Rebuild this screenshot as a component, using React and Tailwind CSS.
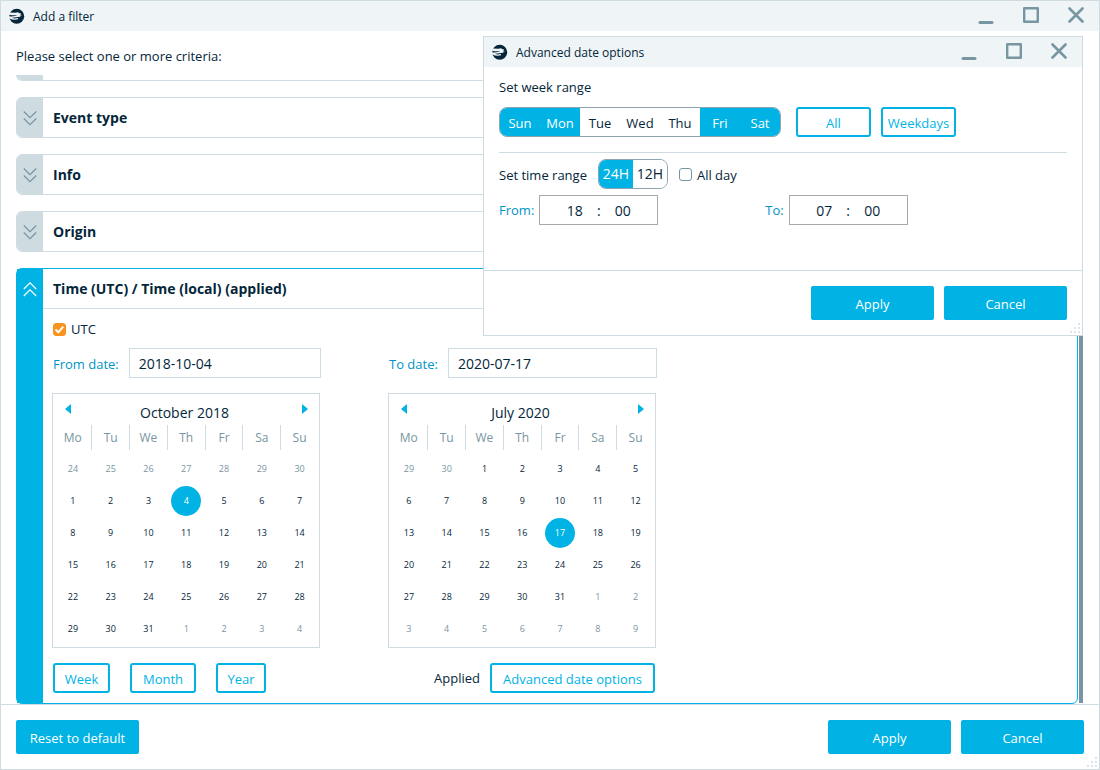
import React, { useState } from 'react';

const DAY_NAMES = ['Mo', 'Tu', 'We', 'Th', 'Fr', 'Sa', 'Su'];
const WEEK = ['Sun', 'Mon', 'Tue', 'Wed', 'Thu', 'Fri', 'Sat'];

// Build six weeks of days, padded with the neighbouring months
function buildWeeks(lead, prevLast, last) {
  const weeks = [];
  for (let w = 0; w < 6; w++) {
    const row = [];
    for (let d = 0; d < 7; d++) {
      const n = w * 7 + d - lead + 1;
      if (n < 1) row.push({ day: prevLast + n, outside: true });
      else if (n > last) row.push({ day: n - last, outside: true });
      else row.push({ day: n, outside: false });
    }
    weeks.push(row);
  }
  return weeks;
}

export default function App() {
  const [utc, setUtc] = useState(true);

  return (
    <div className="relative flex h-screen flex-col overflow-hidden border border-[#cedbe0] bg-white font-['Open_Sans','Noto_Sans',sans-serif] text-[13px] leading-5 text-[#04263a]">
      <TitleBar title="Add a filter" />

      <p className="px-[15px] pt-[15px] pb-[9px]">Please select one or more criteria:</p>

      {/* Criteria list */}
      <main className="flex min-h-0 flex-1 gap-px pr-4 pl-[15px]">
        <div className="flex min-w-0 flex-1 flex-col gap-4 overflow-hidden">
          <div className="flex h-1.5 shrink-0 overflow-hidden rounded-b-md border-b border-[#cedbe0]">
            <div className="w-[27px] bg-[#cedbe0]" />
          </div>
          <CollapsedCard title="Event type" />
          <CollapsedCard title="Info" />
          <CollapsedCard title="Origin" />

          <section className="flex flex-1 rounded-md border border-[#00b3e4]">
            <button aria-label="Collapse" className="flex w-[26px] items-start justify-center bg-[#00b3e4] pt-3 text-white">
              <Chevrons up />
            </button>
            <div className="min-w-0 flex-1">
              <h2 className="flex h-10 items-center border-b border-[#cedbe0] px-2.5 text-sm font-bold">
                Time (UTC) / Time (local) (applied)
              </h2>
              <div className="px-[9px] pt-2.5">
                <label className="flex h-5 items-center gap-[5px] pl-px">
                  <Checkbox checked={utc} onChange={() => setUtc(!utc)} />
                  UTC
                </label>
                <div className="mt-[9px] flex gap-[68px]">
                  <DateColumn
                    id="from-date"
                    label="From date:"
                    value="2018-10-04"
                    month="October 2018"
                    weeks={buildWeeks(7, 30, 31)}
                    selected={4}
                  >
                    <div className="flex gap-5 pl-px">
                      <OutlineButton className="w-[57px]">Week</OutlineButton>
                      <OutlineButton className="w-[66px]">Month</OutlineButton>
                      <OutlineButton className="w-[50px]">Year</OutlineButton>
                    </div>
                  </DateColumn>
                  <DateColumn
                    id="to-date"
                    label="To date:"
                    value="2020-07-17"
                    month="July 2020"
                    weeks={buildWeeks(2, 30, 31)}
                    selected={17}
                  >
                    <div className="flex items-center justify-end gap-2.5 pr-px">
                      <span>Applied</span>
                      <OutlineButton className="w-[165px]">Advanced date options</OutlineButton>
                    </div>
                  </DateColumn>
                </div>
              </div>
            </div>
          </section>
        </div>
        <div className="mb-px w-1 bg-[#7895a2]" />
      </main>

      <footer className="flex items-center gap-2.5 border-t border-[#cedbe0] p-[15px]">
        <SolidButton>Reset to default</SolidButton>
        <div className="flex-1" />
        <SolidButton>Apply</SolidButton>
        <SolidButton>Cancel</SolidButton>
      </footer>
      <ResizeGrip />

      <AdvancedDialog />
    </div>
  );
}

// Advanced date options, floats over the filter list
function AdvancedDialog() {
  const [days, setDays] = useState(['Sun', 'Mon', 'Fri', 'Sat']);
  const [format, setFormat] = useState('24H');
  const [allDay, setAllDay] = useState(false);

  const toggleDay = (day) => {
    setDays(days.includes(day) ? days.filter((d) => d !== day) : [...days, day]);
  };

  return (
    <div
      role="dialog"
      aria-label="Advanced date options"
      className="absolute top-[35px] right-4 w-[600px] border border-[#cedbe0] bg-white"
    >
      <TitleBar title="Advanced date options" />

      <div className="px-[15px] pt-2.5 pb-[45px]">
        <h3>Set week range</h3>
        <div className="mt-2.5 flex">
          <div className="mr-[15px] flex h-[30px] overflow-hidden rounded-lg border border-[#8ca5b0]">
            {WEEK.map((day) => (
              <button
                key={day}
                aria-pressed={days.includes(day)}
                onClick={() => toggleDay(day)}
                className={`w-10 pt-px ${days.includes(day) ? 'bg-[#00b3e4] text-white' : 'bg-white'}`}
              >
                {day}
              </button>
            ))}
          </div>
          <OutlineButton className="mr-2.5 w-[75px]">All</OutlineButton>
          <OutlineButton className="w-[75px]">Weekdays</OutlineButton>
        </div>

        <div className="mt-[15px] flex items-center border-t border-[#cedbe0] pt-1.5">
          <h3 className="pt-0.5">Set time range</h3>
          <div className="mx-[11px] flex h-[30px] overflow-hidden rounded-lg border border-[#8ca5b0] text-sm">
            {['24H', '12H'].map((f) => (
              <button
                key={f}
                aria-pressed={format === f}
                onClick={() => setFormat(f)}
                className={`w-[34px] ${format === f ? 'bg-[#00b3e4] text-white' : 'bg-white'}`}
              >
                {f}
              </button>
            ))}
          </div>
          <label className="flex items-center gap-[5px]">
            <Checkbox checked={allDay} onChange={() => setAllDay(!allDay)} />
            <span className="pt-0.5">All day</span>
          </label>
        </div>

        <div className="mt-1.5 flex">
          <TimeField label="From:" hours="18" minutes="00" />
          <div className="w-[107px]" />
          <TimeField label="To:" hours="07" minutes="00" />
        </div>
      </div>

      <div className="flex justify-end gap-2.5 border-t border-[#cedbe0] p-[15px]">
        <SolidButton>Apply</SolidButton>
        <SolidButton>Cancel</SolidButton>
      </div>
      <ResizeGrip />
    </div>
  );
}

function TitleBar({ title }) {
  return (
    <header className="flex h-[30px] shrink-0 items-center bg-[#eff4f7] pr-[15px] pl-2 text-xs">
      <Logo />
      <span className="ml-2 flex-1 pt-0.5">{title}</span>
      <div className="flex gap-7 pb-0.5 text-[#7895a2]">
        <button aria-label="Minimize">
          <svg width="16" height="18" viewBox="0 0 16 18" fill="none" stroke="currentColor" strokeWidth="3" strokeLinecap="round">
            <path d="M2 16.500h12" />
          </svg>
        </button>
        <button aria-label="Maximize">
          <svg width="18" height="18" viewBox="0 0 18 18" fill="none" stroke="currentColor" strokeWidth="2.4" strokeLinejoin="round">
            <path d="M2.200 2.200h13.600v13.600H2.200z" />
          </svg>
        </button>
        <button aria-label="Close">
          <svg width="16" height="18" viewBox="0 0 16 18" fill="none" stroke="currentColor" strokeWidth="2.6" strokeLinecap="round">
            <path d="M1.500 2.500l13 13M14.500 2.500l-13 13" />
          </svg>
        </button>
      </div>
    </header>
  );
}

function Logo() {
  return (
    <svg width="16" height="16" viewBox="0 0 16 16">
      <circle cx="7.700" cy="8.200" r="7.500" fill="#04263a" />
      <path
        d="M0 4.600L6.500 4.700 9 4.200l1.500 1 1.800.4-1 .8 1.600 1.200-2.300.2 1.200 1-3 .3C7 9.400 3.500 10 0 10.200z"
        fill="#eff4f7"
      />
      <path d="M.3 6.700C3 7.400 5.300 7.500 8 7c-1.500 1.200-3.500 1.600-7.400 1.400z" fill="#04263a" />
      <path d="M0 9.400c3 1.800 6 2 9 1.200" fill="none" stroke="#eff4f7" strokeWidth="1.300" />
    </svg>
  );
}

// Collapsed criterion row
function CollapsedCard({ title }) {
  return (
    <section className="flex h-[41px] shrink-0 overflow-hidden rounded-md border border-[#cedbe0]">
      <button aria-label="Expand" className="flex w-[26px] items-center justify-center bg-[#cedbe0] text-[#7895a2]">
        <Chevrons />
      </button>
      <h2 className="flex items-center px-2.5 pt-px text-sm font-bold">{title}</h2>
    </section>
  );
}

function Chevrons({ up = false }) {
  return (
    <svg width="14" height="16" viewBox="0 0 14 16" fill="none" stroke="currentColor" strokeWidth="1.2">
      {up ? <path d="M.8 8L7 1.800 13.200 8M.8 15L7 8.800 13.200 15" /> : <path d="M.8 1.500L7 7.700 13.200 1.500M.8 8.500L7 14.700 13.200 8.500" />}
    </svg>
  );
}

function DateColumn({ id, label, value, month, weeks, selected, children }) {
  return (
    <div className="w-[268px]">
      <div className="-mr-px flex items-center gap-2.5 pl-px">
        <label htmlFor={id} className="shrink-0 pt-0.5 text-[#0094c8]">{label}</label>
        <input
          id={id}
          defaultValue={value}
          className="h-[30px] min-w-0 flex-1 border border-[#cedbe0] px-[9px] pt-px text-sm outline-none focus:border-[#00b3e4]"
        />
      </div>
      <Calendar month={month} weeks={weeks} selected={selected} />
      {children}
    </div>
  );
}

function Calendar({ month, weeks, selected }) {
  return (
    <div className="my-[15px] border border-[#cedbe0] pb-0.5">
      <div className="flex h-[31px] items-start pr-2.5 pl-[11px] text-[#00b3e4]">
        <button aria-label="Previous month" className="pt-2.5">
          <svg width="8" height="10" viewBox="0 0 8 10" fill="currentColor"><path d="M7 0v10L1 5z" /></svg>
        </button>
        <span className="flex-1 pt-[9px] pr-1 text-center text-sm leading-5 text-[#04263a]">{month}</span>
        <button aria-label="Next month" className="pt-2.5">
          <svg width="8" height="10" viewBox="0 0 8 10" fill="currentColor"><path d="M1 0v10l6-5z" /></svg>
        </button>
      </div>
      <div className="pl-px">
        <table className="w-full table-fixed text-center">
          <thead>
            <tr className="h-[25px] text-xs text-[#7895a2]">
              {DAY_NAMES.map((name) => (
                <th key={name} className="border-r border-[#cedbe0] p-0 font-normal last:border-transparent">{name}</th>
              ))}
            </tr>
          </thead>
          <tbody className="text-[9px] before:block before:h-[3px] before:content-['']">
            {weeks.map((week, i) => (
              <tr key={i} className="h-8">
                {week.map(({ day, outside }, j) => (
                  <td key={j} className={`p-0 ${outside ? 'text-[#7895a2]' : ''}`}>
                    <button
                      className={`size-[30px] rounded-full ${!outside && day === selected ? 'bg-[#00b3e4] text-white' : ''}`}
                    >
                      {day}
                    </button>
                  </td>
                ))}
              </tr>
            ))}
          </tbody>
        </table>
      </div>
    </div>
  );
}

function TimeField({ label, hours, minutes }) {
  return (
    <fieldset className="flex items-center gap-[5px]">
      <span className="text-[#0094c8]">{label}</span>
      <div className="flex h-[30px] w-[119px] items-center justify-center border border-[#a9a9ac] pt-0.5 text-sm">
        <input aria-label={`${label} hours`} defaultValue={hours} className="w-6 text-center outline-none" />
        <span className="w-6 text-center">:</span>
        <input aria-label={`${label} minutes`} defaultValue={minutes} className="w-6 text-center outline-none" />
      </div>
    </fieldset>
  );
}

function Checkbox({ checked, onChange }) {
  return (
    <span className="relative flex size-[13px]">
      <input
        type="checkbox"
        checked={checked}
        onChange={onChange}
        className="size-[13px] appearance-none rounded-[3px] border border-[#7895a2] bg-white checked:border-[#f7931e] checked:bg-[#f7931e]"
      />
      {checked && (
        <svg className="pointer-events-none absolute inset-0" width="13" height="13" viewBox="0 0 13 13" fill="none" stroke="white" strokeWidth="2">
          <path d="M2.500 6.500l2.800 2.800 5-5.600" />
        </svg>
      )}
    </span>
  );
}

function SolidButton({ children }) {
  return <button className="h-[34px] w-[123px] rounded-xs bg-[#00b3e4] pt-0.5 text-white">{children}</button>;
}

function OutlineButton({ className = '', children }) {
  return (
    <button className={`h-[30px] rounded-[3px] border-2 border-[#00b3e4] bg-white pt-0.5 whitespace-nowrap text-[#00b3e4] ${className}`}>
      {children}
    </button>
  );
}

function ResizeGrip() {
  return (
    <svg className="absolute right-0.5 bottom-0.5" width="10" height="10" viewBox="0 0 10 10" fill="#dbe5ea">
      <path d="M8 0h2v2H8zM4 4h2v2H4zM8 4h2v2H8zM0 8h2v2H0zM4 8h2v2H4zM8 8h2v2H8z" />
    </svg>
  );
}
